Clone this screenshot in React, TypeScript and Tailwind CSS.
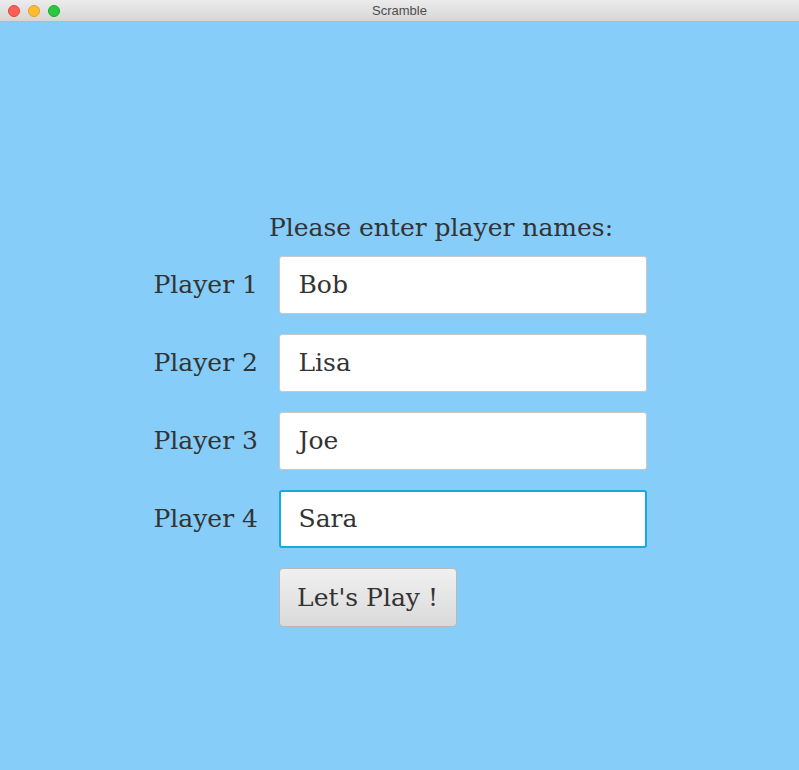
import React from "react";

const font = { fontFamily: '"DejaVu Serif", "Liberation Serif", serif' };

export default function App() {
  const players = [
    { label: "Player 1", value: "Bob", focus: false },
    { label: "Player 2", value: "Lisa", focus: false },
    { label: "Player 3", value: "Joe", focus: false },
    { label: "Player 4", value: "Sara", focus: true },
  ];
  return (
    <div className="w-[799px] h-[770px] flex flex-col bg-[#87cdf9] overflow-hidden">
      <div className="relative h-[22px] shrink-0 bg-gradient-to-b from-[#ececec] to-[#d6d6d6] border-b border-[#b9b9b9] flex items-center justify-center">
        <div className="absolute left-[8px] top-[5px] flex gap-[8px]">
          <span className="w-[12px] h-[12px] rounded-full bg-[#fc5f57] border border-[#e0443e]" />
          <span className="w-[12px] h-[12px] rounded-full bg-[#fdbc2e] border border-[#dea123]" />
          <span className="w-[12px] h-[12px] rounded-full bg-[#28c840] border border-[#1aab29]" />
        </div>
        <span className="text-[13px] text-[#4d4d4d]" style={{ fontFamily: '"Liberation Sans", Arial, sans-serif' }}>
          Scramble
        </span>
      </div>
      <div className="flex flex-col items-center pt-[187px] text-[#333333]" style={font}>
        <div className="text-[25px] leading-[38px] pl-[83px]">Please enter player names:</div>
        <div className="flex flex-col gap-[20px] mt-[9px]">
          {players.map((p) => (
            <div key={p.label} className="flex items-center">
              <div className="w-[126px] text-[25px] leading-[58px] pl-[1px]">{p.label}</div>
              <div
                className={
                  "w-[368px] h-[58px] bg-white rounded-[3px] flex items-center pl-[19px] text-[25px] " +
                  (p.focus ? "border-2 border-[#1aa6e0]" : "border border-[#c9c9c9]")
                }
              >
                <span className={p.focus ? "-ml-[1px]" : ""}>{p.value}</span>
              </div>
            </div>
          ))}
          <div className="flex pl-[126px]">
            <div className="w-[178px] h-[59px] rounded-[4px] border border-[#b8b8b8] bg-gradient-to-b from-[#f0f0f0] to-[#dadada] flex items-center justify-center text-[25px]">
              Let's Play !
            </div>
          </div>
        </div>
      </div>
    </div>
  );
}
